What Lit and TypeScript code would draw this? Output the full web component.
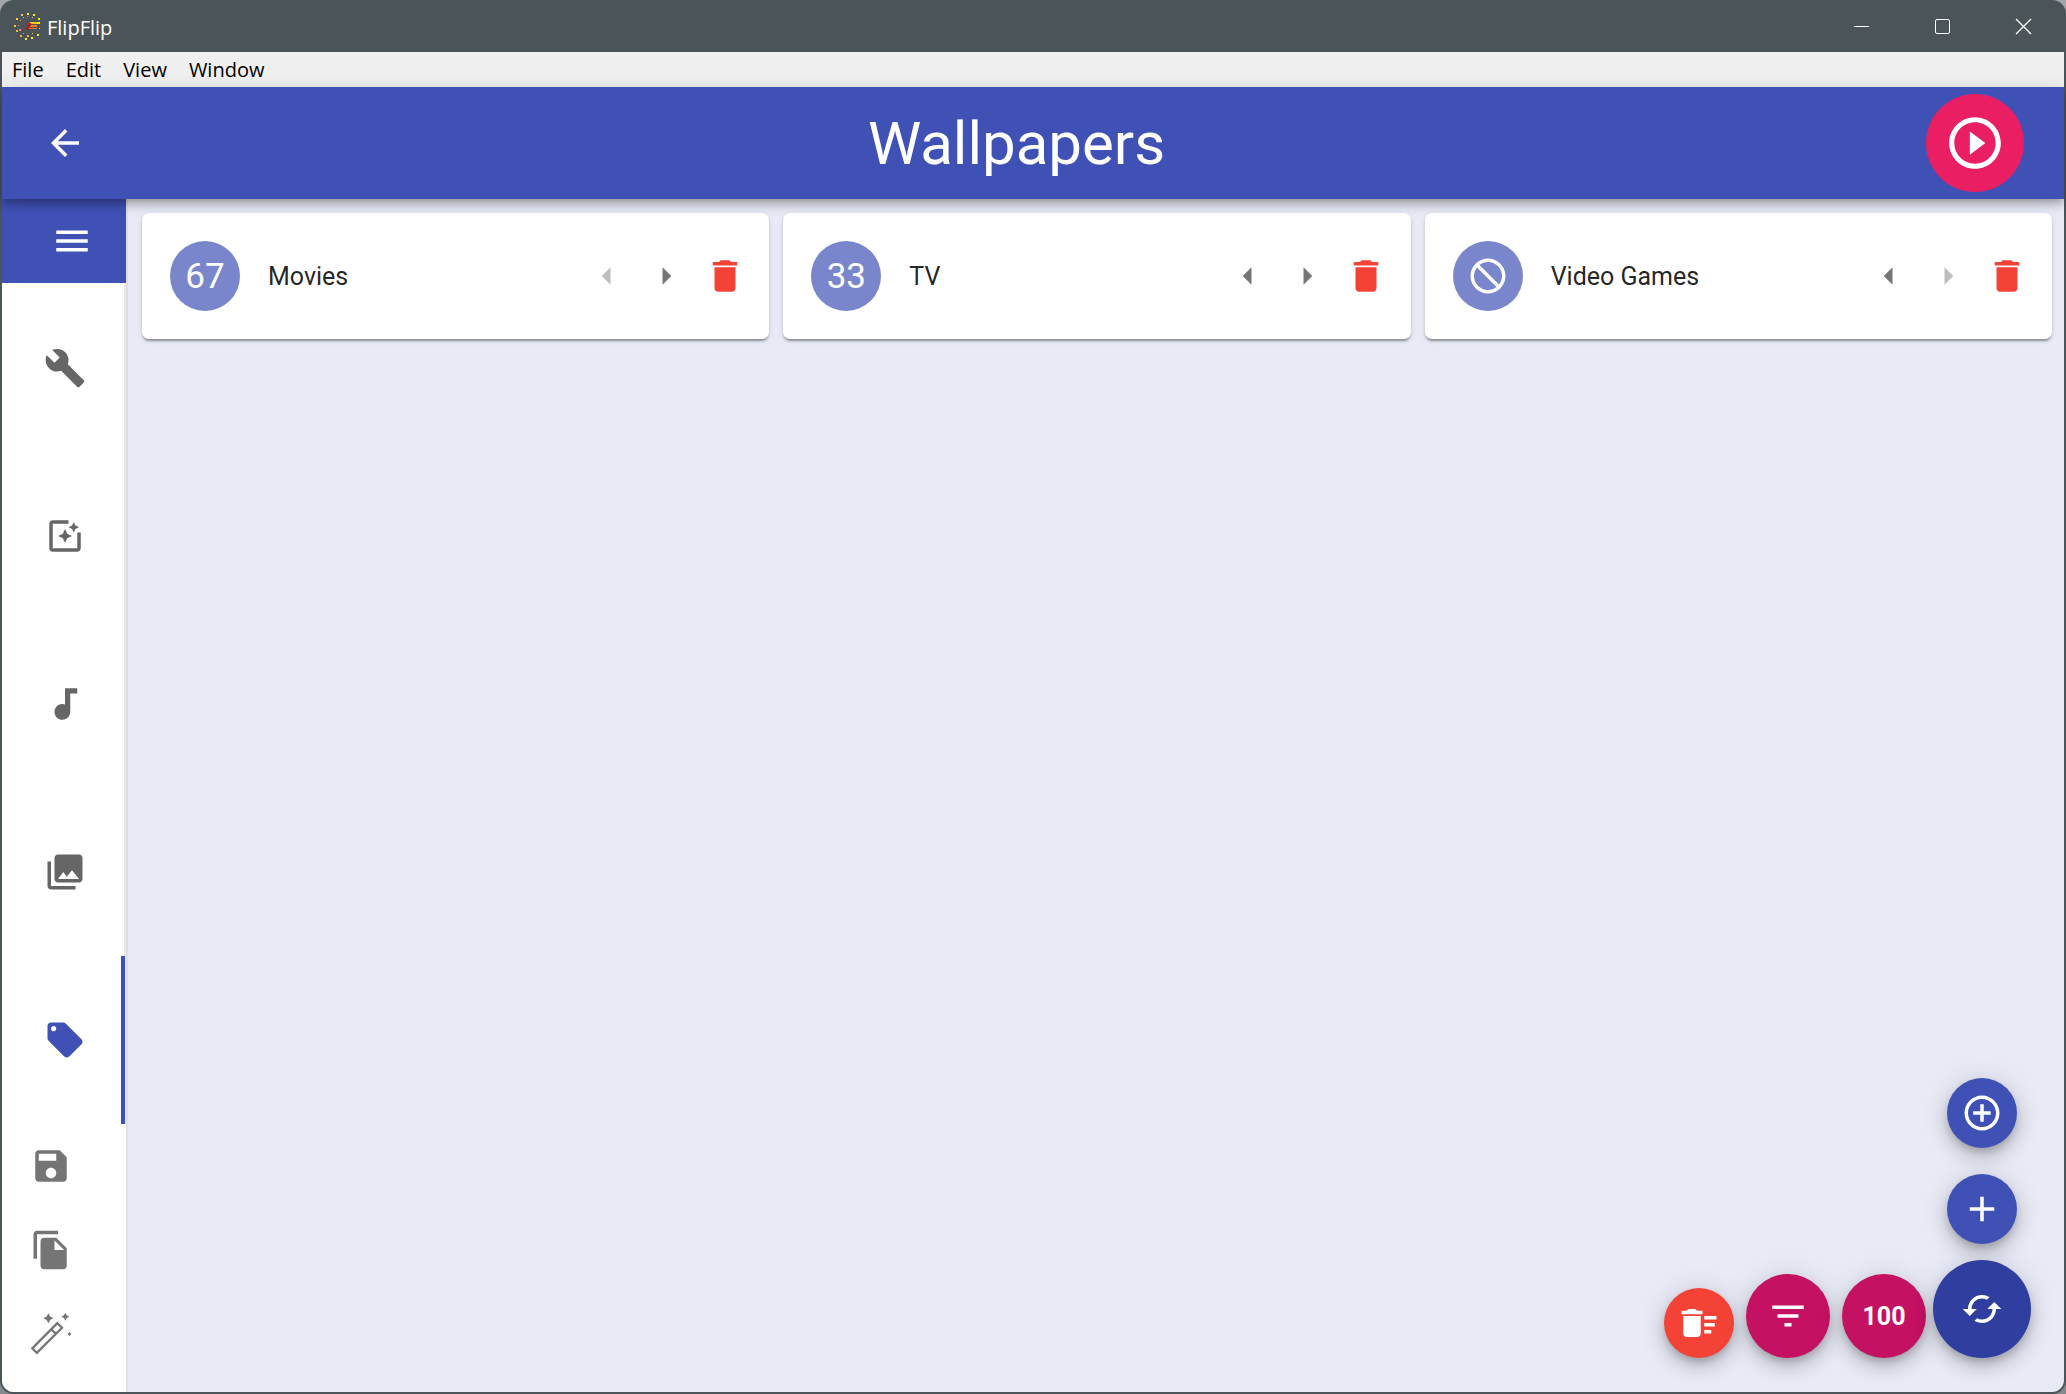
import { LitElement, html, css, svg } from "lit";
import { customElement, property, state } from "lit/decorators.js";
import { classMap } from "lit/directives/class-map.js";

const ICONS: Record<string, string> = {
  back: "M20 11H7.83l5.59-5.59L12 4l-8 8 8 8 1.41-1.41L7.83 13H20v-2z",
  play: "M10 16.5l6-4.500-6-4.500v9zM12 2C6.480 2 2 6.480 2 12s4.480 10 10 10 10-4.480 10-10S17.520 2 12 2zm0 18c-4.410 0-8-3.590-8-8s3.590-8 8-8 8 3.590 8 8-3.590 8-8 8z",
  menu: "M3 18h18v-2H3v2zm0-5h18v-2H3v2zm0-7v2h18V6H3z",
  build: "M22.7 19l-9.100-9.100c.9-2.300.4-5-1.500-6.900-2-2-5-2.400-7.400-1.300L9 6 6 9 1.600 4.700C.4 7.100.9 10.100 2.900 12.100c1.900 1.900 4.600 2.400 6.900 1.500l9.100 9.100c.4.4 1 .4 1.400 0l2.300-2.300c.5-.4.5-1.100.1-1.400z",
  effects: "M19.020 10v9H5V5h9V3H5.020c-1.100 0-2 .9-2 2v14c0 1.100.9 2 2 2H19c1.100 0 2-.9 2-2v-9h-1.980zM17 10l.940-2.060L20 7l-2.060-.940L17 4l-.940 2.060L14 7l2.060.940L17 10zm-3.750.750L12 8l-1.250 2.750L8 12l2.750 1.250L12 16l1.250-2.750L16 12l-2.750-1.250z",
  audio: "M12 3v9.280c-.470-.170-.970-.280-1.500-.280C8.010 12 6 14.010 6 16.500S8.010 21 10.500 21c2.310 0 4.200-1.750 4.450-4H15V6h4V3h-7z",
  library: "M22 16V4c0-1.100-.9-2-2-2H8c-1.100 0-2 .9-2 2v12c0 1.100.9 2 2 2h12c1.100 0 2-.9 2-2zm-11-4l2.030 2.710L16 11l4 5H8l3-4zM2 6v14c0 1.100.9 2 2 2h14v-2H4V6H2z",
  tag: "M21.410 11.580l-9-9C12.050 2.220 11.550 2 11 2H4c-1.100 0-2 .9-2 2v7c0 .550.220 1.050.590 1.420l9 9c.360.360.860.580 1.410.580.550 0 1.050-.220 1.410-.590l7-7c.370-.360.590-.860.590-1.410 0-.550-.230-1.060-.590-1.420zM5.500 7C4.670 7 4 6.330 4 5.500S4.670 4 5.500 4 7 4.670 7 5.500 6.330 7 5.500 7z",
  save: "M17 3H5c-1.110 0-2 .9-2 2v14c0 1.100.890 2 2 2h14c1.100 0 2-.9 2-2V7l-4-4zm-5 16c-1.660 0-3-1.340-3-3s1.340-3 3-3 3 1.340 3 3-1.340 3-3 3zm3-10H5V5h10v4z",
  copy: "M16 1H4c-1.100 0-2 .9-2 2v14h2V3h12V1zm-1 4l6 6v10c0 1.100-.9 2-2 2H7.990C6.890 23 6 22.100 6 21l.010-14c0-1.100.890-2 1.990-2h7zm-1 7h5.500L14 6.500V12z",
  left: "M14 7l-5 5 5 5V7z",
  right: "M10 17l5-5-5-5v10z",
  trash: "M6 19c0 1.100.9 2 2 2h8c1.100 0 2-.9 2-2V7H6v12zM19 4h-3.500l-1-1h-5l-1 1H5v2h14V4z",
  block: "M12 2C6.480 2 2 6.480 2 12s4.480 10 10 10 10-4.480 10-10S17.520 2 12 2zm0 18c-4.420 0-8-3.580-8-8 0-1.850.630-3.550 1.690-4.900L16.900 18.310C15.550 19.370 13.850 20 12 20zm6.310-3.100L7.100 5.690C8.450 4.630 10.150 4 12 4c4.420 0 8 3.580 8 8 0 1.850-.630 3.550-1.690 4.900z",
  addCircle: "M13 7h-2v4H7v2h4v4h2v-4h4v-2h-4V7zm-1-5C6.480 2 2 6.480 2 12s4.480 10 10 10 10-4.480 10-10S17.520 2 12 2zm0 18c-4.410 0-8-3.590-8-8s3.590-8 8-8 8 3.590 8 8-3.590 8-8 8z",
  add: "M19 13h-6v6h-2v-6H5v-2h6V5h2v6h6v2z",
  sort: "M10 18h4v-2h-4v2zM3 6v2h18V6H3zm3 7h12v-2H6v2z",
  sweep: "M15 16h4v2h-4zm0-8h7v2h-7zm0 4h6v2h-6zM3 18c0 1.100.9 2 2 2h6c1.100 0 2-.9 2-2V8H3v10zM14 5h-3l-1-1H6L5 5H2v2h12z",
  cached: "M19 8l-4 4h3c0 3.310-2.690 6-6 6-1.010 0-1.970-.250-2.800-.7l-1.460 1.460C8.970 19.540 10.430 20 12 20c4.420 0 8-3.580 8-8h3l-4-4zM6 12c0-3.310 2.690-6 6-6 1.010 0 1.970.250 2.800.7l1.460-1.460C15.030 4.460 13.570 4 12 4c-4.420 0-8 3.580-8 8H1l4 4 4-4H6z",
};

const icon = (name: string) =>
  html`<svg class="icon" viewBox="0 0 24 24" aria-hidden="true"><path d=${ICONS[name]}></path></svg>`;

const iconStyles = css`
  .icon {
    display: block;
    width: 42px;
    height: 42px;
    fill: currentColor;
  }
  button {
    display: flex;
    align-items: center;
    justify-content: center;
    margin: 0;
    padding: 0;
    border: 0;
    background: none;
    color: inherit;
    font: inherit;
    cursor: pointer;
  }
`;

/* Sparks around the letter mark, as [x, y, size, colour] on a 27 unit grid. */
const SPARKS: [number, number, number, string][] = [
  [13, 0, 2, "#ffe92e"], [19, 1, 2, "#fff000"], [7, 1, 2, "#ffc82e"], [24, 5, 2, "#fff000"],
  [2, 5, 2, "#ffcc2e"], [0, 12, 2, "#ffc42e"], [2, 17, 2, "#ffb52e"], [6, 22, 2, "#ffb030"],
  [11, 25, 2, "#ffe02e"], [17, 24, 2, "#fff000"], [23, 21, 2, "#fff000"], [25, 15, 1, "#ffe000"],
  [13, 3, 1, "#e8952e"], [18, 4, 1, "#ffd42e"], [9, 4, 1, "#f0a52e"], [6, 7, 1, "#f0a52e"],
  [4, 12, 1, "#e8902e"], [5, 16, 2, "#ff8a4e"], [9, 20, 1, "#f0902e"], [13, 22, 2, "#ffaa2e"],
  [18, 20, 1, "#ffc52e"],
];

@customElement("tag-card")
class TagCard extends LitElement {
  @property() name = "";
  @property() weight = "";
  @property({ type: Boolean }) first = false;
  @property({ type: Boolean }) last = false;

  static styles = [
    iconStyles,
    css`
      :host {
        display: block;
        min-width: 0;
      }
      .card {
        display: flex;
        align-items: center;
        padding: 28px 15px 28px 28px;
        border-radius: 7px;
        background: #fff;
        color: rgba(0, 0, 0, 0.87);
        box-shadow: 0 4px 2px -2px rgba(0, 0, 0, 0.2), 0 2px 2px rgba(0, 0, 0, 0.14),
          0 2px 5px rgba(0, 0, 0, 0.12);
      }
      .avatar {
        flex: none;
        width: 70px;
        height: 70px;
        margin-right: 28px;
        border-radius: 50%;
        background: #7986cb;
        color: #fff;
        font-size: 35px;
      }
      .name {
        flex: 1;
        min-width: 0;
        margin: 0;
        padding-top: 2px;
        font-size: 25px;
        font-weight: 400;
        line-height: 36px;
      }
      .actions {
        display: flex;
        color: #757575;
      }
      .action {
        width: 59px;
        height: 60px;
      }
      .action:disabled {
        color: rgba(0, 0, 0, 0.26);
        cursor: default;
      }
      .delete {
        color: #f44336;
      }
    `,
  ];

  render() {
    return html`<article class="card">
      <button class="avatar" aria-label="Weight of ${this.name}">
        ${this.weight ? this.weight : icon("block")}
      </button>
      <h2 class="name">${this.name}</h2>
      <div class="actions">
        <button class="action" aria-label="Decrease" ?disabled=${this.first}>${icon("left")}</button>
        <button class="action" aria-label="Increase" ?disabled=${this.last}>${icon("right")}</button>
        <button class="action delete" aria-label="Delete">${icon("trash")}</button>
      </div>
    </article>`;
  }
}

@customElement("app-root")
class AppRoot extends LitElement {
  @state() private tab = "tag";

  private tabs = [
    { id: "build", label: "Options" },
    { id: "effects", label: "Effects" },
    { id: "audio", label: "Audio" },
    { id: "library", label: "Sources" },
    { id: "tag", label: "Tags" },
  ];

  private tags = [
    { name: "Movies", weight: "67" },
    { name: "TV", weight: "33" },
    { name: "Video Games", weight: "" },
  ];

  static styles = [
    iconStyles,
    css`
      :host {
        display: block;
        height: 100vh;
        background: linear-gradient(#a4a7a9, #85888a);
        font-family: Roboto, "Liberation Sans", sans-serif;
      }
      .window {
        display: flex;
        flex-direction: column;
        box-sizing: border-box;
        height: 100%;
        padding: 0 2px 2px;
        border-radius: 14px;
        overflow: hidden;
        background: #4b5459;
      }
      .titlebar {
        flex: none;
        display: flex;
        align-items: center;
        height: 52px;
        padding-left: 12px;
        color: #fff;
        font-family: "Open Sans", "Noto Sans", sans-serif;
        font-size: 20px;
      }
      .logo {
        width: 27px;
        height: 27px;
        margin-right: 6px;
      }
      .apptitle {
        flex: 1;
        padding-top: 2px;
      }
      .caption {
        width: 81px;
        height: 52px;
        padding-top: 1px;
      }
      .caption svg {
        width: 15px;
        height: 15px;
        overflow: visible;
        fill: none;
        stroke: #fff;
      }
      .caption .cross {
        stroke-width: 1.3;
      }
      .menubar {
        flex: none;
        display: flex;
        align-items: center;
        gap: 22px;
        height: 35px;
        padding-left: 10px;
        background: #f0f0f0;
        color: #000;
        font-family: "Open Sans", "Noto Sans", sans-serif;
        font-size: 20px;
      }
      .appbar {
        flex: none;
        z-index: 2;
        display: flex;
        align-items: center;
        height: 112px;
        padding: 0 40px 0 42px;
        background: #3f51b5;
        color: #fff;
        box-shadow: 0 4px 7px -2px rgba(0, 0, 0, 0.2), 0 7px 9px rgba(0, 0, 0, 0.14),
          0 2px 18px rgba(0, 0, 0, 0.12);
      }
      .side {
        flex: 1;
        display: flex;
      }
      .side-end {
        justify-content: flex-end;
      }
      .title {
        margin: 0;
        padding: 2px 35px 0 0;
        font-size: 60px;
        font-weight: 400;
        line-height: 72px;
      }
      .start {
        width: 98px;
        height: 98px;
        border-radius: 50%;
        background: #e91e63;
      }
      .start .icon {
        width: 62px;
        height: 62px;
      }
      .body {
        position: relative;
        flex: 1;
        display: flex;
        min-height: 0;
        border-radius: 0 0 12px 12px;
        overflow: hidden;
        background: #e8eaf6;
      }
      .drawer {
        flex: none;
        display: flex;
        flex-direction: column;
        width: 124px;
        border-right: 2px solid #e0e0e0;
        background: #fff;
      }
      .toggle {
        height: 84px;
        padding-left: 16px;
        background: #3f51b5;
        color: #fff;
      }
      .tabs {
        display: flex;
        flex-direction: column;
        margin-top: 1px;
        border-right: 2px solid #e6e6e6;
        color: #666;
      }
      .tab {
        height: 168px;
        padding-left: 4px;
      }
      .tab.active {
        margin-right: -1px;
        padding-left: 7px;
        border-right: 4px solid #3f51b5;
        color: #3f51b5;
      }
      .tools {
        display: flex;
        flex-direction: column;
        color: #757575;
      }
      .tool {
        justify-content: flex-start;
        height: 84px;
        padding-left: 28px;
      }
      .wand {
        overflow: visible;
        fill: none;
        stroke: currentColor;
        stroke-width: 1.3;
      }
      .wand .star {
        fill: currentColor;
        stroke: none;
      }
      .grid {
        flex: 1;
        display: grid;
        grid-template-columns: repeat(3, minmax(0, 1fr));
        align-content: start;
        gap: 14px;
        padding: 14px 12px 14px 14px;
      }
      .fabs {
        position: absolute;
        right: 33px;
        bottom: 34px;
        display: flex;
        align-items: flex-end;
        gap: 12px;
      }
      .dial {
        display: flex;
        flex-direction: column;
        align-items: center;
        gap: 16px;
        margin-left: -5px;
      }
      .dial-actions {
        display: flex;
        flex-direction: column;
        gap: 26px;
      }
      .fab {
        width: 84px;
        height: 84px;
        border-radius: 50%;
        background: #c51162;
        color: #fff;
        font-size: 25px;
        font-weight: 700;
        box-shadow: 0 5px 9px -2px rgba(0, 0, 0, 0.2), 0 10px 18px rgba(0, 0, 0, 0.14),
          0 2px 31px rgba(0, 0, 0, 0.12);
      }
      .small {
        width: 70px;
        height: 70px;
        background: #3f51b5;
      }
      .danger {
        background: #f44336;
      }
      .large {
        width: 98px;
        height: 98px;
        background: #303f9f;
      }
    `,
  ];

  private logo() {
    return html`<svg class="logo" viewBox="0 0 27 27" aria-hidden="true">
      ${SPARKS.map(([x, y, s, c]) => svg`<rect x=${x} y=${y} width=${s} height=${s} fill=${c}></rect>`)}
      <path d="M16 9h10v2H15z" fill="#ffc81a"></path>
      <path d="M23 9h3v2h-3z" fill="#fff000"></path>
      <path d="M14 10h3l-3 7h-2z" fill="#d01010"></path>
      <path d="M17 12h6v2h-7zM15 15h8v1h-8z" fill="#f47a20"></path>
    </svg>`;
  }

  private wand() {
    return html`<svg class="icon wand" viewBox="0 0 24 24" aria-hidden="true">
      <path d="M1.300 20.200L15.600 5.800l2.700 2.600L3.900 22.800zM12.100 9.300l2.700 2.600"></path>
      <path class="star" d="M10.500.100l1 1.900 1.900 1-1.900 1-1 1.900-1-1.900-1.900-1 1.900-1z"></path>
      <path class="star" d="M20.200-.2l.8 1.500 1.500.8-1.500.8-.8 1.500-.8-1.500-1.500-.8 1.500-.8z"></path>
      <path class="star" d="M22.500 10.700l.5.8.8.5-.8.5-.5.8-.5-.8-.8-.5.8-.5z"></path>
    </svg>`;
  }

  render() {
    return html`<div class="window">
      <header class="titlebar">
        ${this.logo()}
        <span class="apptitle">FlipFlip</span>
        <button class="caption" aria-label="Minimize">
          <svg viewBox="0 0 15 15"><path d="M0 7.500h15"></path></svg>
        </button>
        <button class="caption" aria-label="Maximize">
          <svg viewBox="0 0 15 15"><rect x="0.5" y="0.5" width="14" height="14" rx="1.5"></rect></svg>
        </button>
        <button class="caption" aria-label="Close">
          <svg class="cross" viewBox="0 0 15 15"><path d="M0 0l15 15M15 0L0 15"></path></svg>
        </button>
      </header>
      <nav class="menubar">
        ${["File", "Edit", "View", "Window"].map((m) => html`<button>${m}</button>`)}
      </nav>
      <header class="appbar">
        <div class="side"><button aria-label="Back">${icon("back")}</button></div>
        <h1 class="title">Wallpapers</h1>
        <div class="side side-end">
          <button class="start" aria-label="Play">${icon("play")}</button>
        </div>
      </header>
      <div class="body">
        <aside class="drawer">
          <button class="toggle" aria-label="Toggle drawer">${icon("menu")}</button>
          <div class="tabs" role="tablist">
            ${this.tabs.map(
              (t) => html`<button
                class=${classMap({ tab: true, active: this.tab === t.id })}
                role="tab"
                aria-label=${t.label}
                aria-selected=${this.tab === t.id}
                @click=${() => (this.tab = t.id)}
              >${icon(t.id)}</button>`
            )}
          </div>
          <div class="tools">
            <button class="tool" aria-label="Save">${icon("save")}</button>
            <button class="tool" aria-label="Clone">${icon("copy")}</button>
            <button class="tool" aria-label="Generate">${this.wand()}</button>
          </div>
        </aside>
        <main class="grid">
          ${this.tags.map(
            (t, i) => html`<tag-card
              .name=${t.name}
              .weight=${t.weight}
              .first=${i === 0}
              .last=${i === this.tags.length - 1}
            ></tag-card>`
          )}
        </main>
        <div class="fabs">
          <button class="fab small danger" aria-label="Remove all">${icon("sweep")}</button>
          <button class="fab" aria-label="Sort">${icon("sort")}</button>
          <button class="fab" aria-label="Total weight">100</button>
          <div class="dial">
            <div class="dial-actions">
              <button class="fab small" aria-label="Add group">${icon("addCircle")}</button>
              <button class="fab small" aria-label="Add">${icon("add")}</button>
            </div>
            <button class="fab large" aria-label="Switch mode">${icon("cached")}</button>
          </div>
        </div>
      </div>
    </div>`;
  }
}
